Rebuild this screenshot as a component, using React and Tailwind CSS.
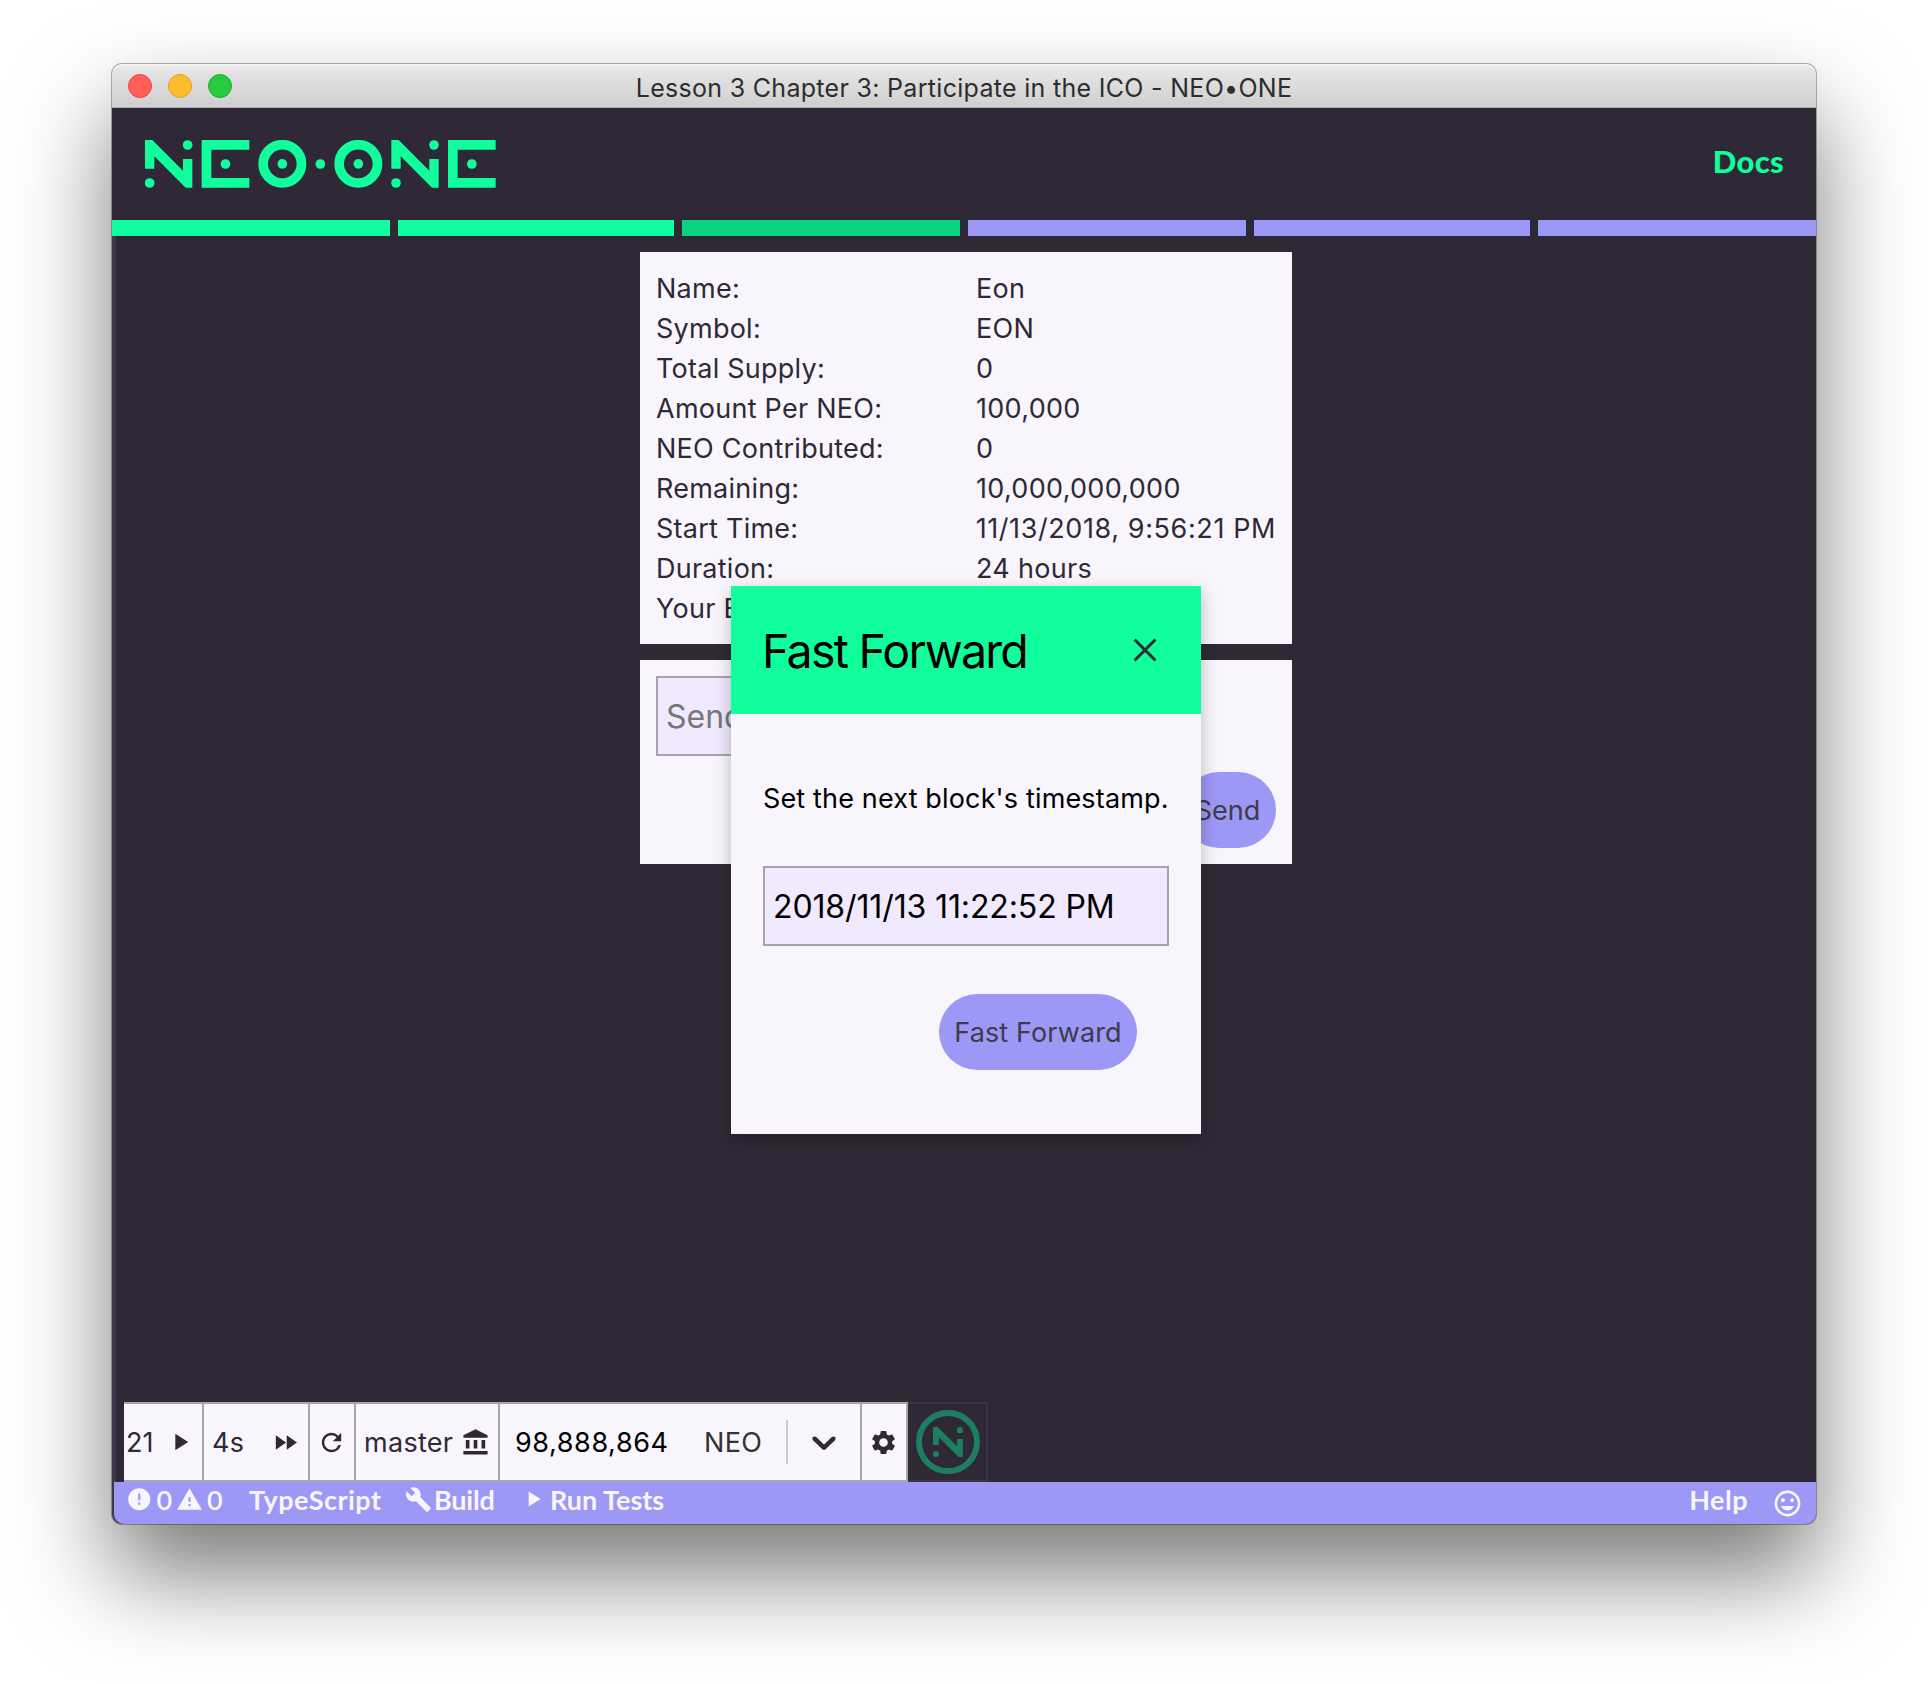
import React from "react";
import {
  MdPlayArrow,
  MdFastForward,
  MdRefresh,
  MdAccountBalance,
  MdSettings,
  MdError,
  MdWarning,
  MdBuild,
  MdInsertEmoticon,
} from "react-icons/md";

const NShape = () => (
  <>
    <path d="M0 0H22L114 92V57H142V143H122L28 49V86H0Z" />
    <circle cx="128" cy="15" r="14.5" />
    <circle cx="14" cy="129" r="14.5" />
  </>
);

const EShape = () => (
  <>
    <path d="M0 0H143V29H29V114H143V143H0Z" />
    <circle cx="71.5" cy="72" r="14.5" />
  </>
);

const OShape = () => (
  <>
    <circle cx="72" cy="71.5" r="57.5" fill="none" stroke="currentColor" strokeWidth="29" />
    <circle cx="72" cy="71.5" r="14.5" />
  </>
);

const Logo = () => (
  <svg className="ml-[0.67px] h-12 w-[351px] text-[#10ff9c]" viewBox="134 270 1053 144" fill="currentColor">
    <g transform="translate(134 270)"><NShape /></g>
    <g transform="translate(304 270)"><EShape /></g>
    <g transform="translate(474 270)"><OShape /></g>
    <circle cx="660" cy="342" r="14.5" />
    <g transform="translate(702 270)"><OShape /></g>
    <g transform="translate(873 270)"><NShape /></g>
    <g transform="translate(1043 270)"><EShape /></g>
  </svg>
);

const Badge = () => (
  <svg className="size-16 text-[#1e7e60]" viewBox="0 0 192 192" fill="currentColor">
    <circle cx="96" cy="96" r="87" fill="none" stroke="currentColor" strokeWidth="18" />
    <g transform="translate(51 51) scale(0.63)"><NShape /></g>
  </svg>
);

const Chevron = () => (
  <svg className="size-10" viewBox="0 0 20 20" fill="currentColor">
    <path d="M4.516 7.548c0.436-0.446 1.043-0.481 1.576 0l3.908 3.747 3.908-3.747c0.533-0.481 1.141-0.446 1.574 0 0.436 0.445 0.408 1.197 0 1.615-0.406 0.418-4.695 4.502-4.695 4.502-0.217 0.223-0.502 0.335-0.787 0.335s-0.57-0.112-0.789-0.335c0 0-4.287-4.084-4.695-4.502s-0.436-1.17 0-1.615z" />
  </svg>
);

const details = [
  ["Name:", "Eon"],
  ["Symbol:", "EON"],
  ["Total Supply:", "0"],
  ["Amount Per NEO:", "100,000"],
  ["NEO Contributed:", "0"],
  ["Remaining:", "10,000,000,000"],
  ["Start Time:", "11/13/2018, 9:56:21 PM"],
  ["Duration:", "24 hours"],
  ["Your Balance:", "0"],
];

const steps = [
  "w-[278px] bg-[#10ff9c]",
  "w-[276px] bg-[#10ff9c]",
  "w-[278px] bg-[#0bd381]",
  "w-[278px] bg-[#9c98f6]",
  "w-[276px] bg-[#9c98f6]",
  "w-[278px] bg-[#9c98f6]",
];

function TitleBar() {
  return (
    <div className="relative flex h-11 items-center rounded-t-[10px] border-b border-[#b4b2b6] bg-linear-to-b from-[#e9e9e9] to-[#cfcfcf] pt-px pl-4 shadow-[inset_0_2px_0_#f4f4f4]">
      <div className="flex gap-4">
        <span className="size-6 rounded-full border border-[#e0443e] bg-[#ff5f57]" />
        <span className="size-6 rounded-full border border-[#dea123] bg-[#ffbd2e]" />
        <span className="size-6 rounded-full border border-[#1aab29] bg-[#28ca41]" />
      </div>
      <span className="absolute inset-x-0 pt-1 text-center text-[25px] leading-none tracking-[0.3px] text-[#2e2d2e]">
        Lesson 3 Chapter 3: Participate in the ICO - NEO•ONE
      </span>
    </div>
  );
}

function Toolbar() {
  return (
    <div className="flex h-20 pl-3 leading-none text-[#2f2937]">
      <div className="flex border-y-2 border-[#aaa6ad] bg-[#f8f5fd]">
        <div className="flex w-20 items-center border-r-2 border-[#aaa6ad] pl-0.5">
          <span className="w-10">21</span>
          <MdPlayArrow size={28} />
        </div>
        <div className="flex w-[106px] items-center border-r-2 border-[#aaa6ad] pl-2">
          <span className="w-[59px] tracking-[0.3px]">4s</span>
          <MdFastForward size={29} />
        </div>
        <div className="flex w-[46px] items-center justify-center border-r-2 border-[#aaa6ad] pr-px">
          <MdRefresh size={29} />
        </div>
        <div className="flex w-36 items-center border-r-2 border-[#aaa6ad] pl-2">
          <span className="w-[97px] tracking-[0.3px]">master</span>
          <MdAccountBalance size={29} />
        </div>
        <div className="flex w-[362px] items-center border-r-2 border-[#aaa6ad] pl-[15px]">
          <span className="w-[189px] tracking-[0.6px] text-black">98,888,864</span>
          <span className="w-[82px] tracking-[0.3px] text-[#333]">NEO</span>
          <span className="h-11 w-0.5 bg-[#ccc9d0]" />
          <span className="ml-4">
            <Chevron />
          </span>
        </div>
        <div className="flex w-[46px] items-center justify-center border-r-2 border-[#aaa6ad] pr-px">
          <MdSettings size={29} />
        </div>
      </div>
      <div className="flex w-20 items-center justify-center border-2 border-l-0 border-[#3b3449] pl-0.5">
        <Badge />
      </div>
    </div>
  );
}

function Footer() {
  return (
    <div className="ml-0.5 flex h-[42px] items-center rounded-b-[10px] bg-[#9c98f6] pr-[13px] pb-2 pl-3 font-['Lato',sans-serif] text-[27px] leading-none font-bold text-[#f8f5fd]">
      <MdError size={26.5} className="mr-1" />
      <span className="w-[19.5px] font-semibold">0</span>
      <MdWarning size={27} className="mr-1" />
      <span className="w-[42px] font-semibold">0</span>
      <span className="w-[156px] tracking-[0.5px]">TypeScript</span>
      <MdBuild size={27} className="mr-0.5" />
      <span className="w-[86px] tracking-[-0.2px]">Build</span>
      <MdPlayArrow size={26} className="mr-1" />
      <span>Run Tests</span>
      <span className="mr-6 ml-auto tracking-[0.5px]">Help</span>
      <MdInsertEmoticon size={31} className="mt-2" />
    </div>
  );
}

function Modal() {
  return (
    <div className="absolute top-[350px] left-[619px] w-[470px] bg-[#f8f5fd] text-black shadow-[0_6px_16px_rgba(0,0,0,0.25)]">
      <div className="flex h-32 items-center justify-between bg-[#10ff9c] pr-[44px] pl-[31px]">
        <h2 className="pt-0.5 text-[46.5px] leading-none tracking-[-1.75px]">Fast Forward</h2>
        <svg className="size-6 text-[#2f2937]" viewBox="0 0 24 24" fill="none" stroke="currentColor" strokeWidth="3">
          <path d="M1.5 1.5L22.5 22.5M22.5 1.5L1.5 22.5" />
        </svg>
      </div>
      <div className="flex flex-col px-8 py-16">
        <p className="h-10 pt-px leading-10 tracking-[0.15px] whitespace-nowrap">Set the next block's timestamp.</p>
        <div className="mt-12 flex h-20 items-center border-2 border-[#a7a2af] bg-[#f1e9fe] pt-0.5 pl-2 text-[32px] leading-none tracking-[-0.12px]">
          2018/11/13 11:22:52 PM
        </div>
        <button className="mt-12 mr-8 h-[76px] w-[198px] self-end rounded-full bg-[#9c98f6] pt-0.5 tracking-[0.1px] text-[#403a4c]">
          Fast Forward
        </button>
      </div>
    </div>
  );
}

export default function App() {
  return (
    <div className="h-[1684px] w-[1928px] overflow-hidden bg-white px-28 pt-16 font-['Inter',sans-serif] text-[27px]">
      <div className="h-[1460px] w-[1704px] rounded-[10px] bg-[#3f384d] shadow-[0_0_0_1px_rgba(0,0,0,0.3),0_50px_96px_rgba(0,0,0,0.53)]">
        <TitleBar />
        <div className="flex h-28 items-center justify-between bg-[#2f2937] px-8">
          <Logo />
          <span className="pb-1.5 font-['Lato',sans-serif] text-[31px] leading-none font-black tracking-[0.3px] text-[#10ff9c]">Docs</span>
        </div>
        <div className="flex h-4 gap-2 bg-[#2f2937]">
          {steps.map((step, i) => (
            <div key={i} className={step} />
          ))}
        </div>
        <div className="relative h-[1246px]">
          <div className="ml-1 flex h-full flex-col bg-[#2f2937] pt-4 text-[#2f2937]">
            <div className="mx-auto flex w-[652px] flex-1 flex-col gap-4">
              <div className="bg-[#f8f5fd] p-4">
                {details.map(([label, value]) => (
                  <div key={label} className="flex h-10 items-center leading-none whitespace-nowrap">
                    <span className="w-80 tracking-[0.25px]">{label}</span>
                    <span className={value.includes("/") ? "tracking-[0.6px]" : "tracking-[0.3px]"}>{value}</span>
                  </div>
                ))}
              </div>
              <div className="flex flex-col gap-4 bg-[#f8f5fd] p-4">
                <div className="flex h-20 w-[406px] items-center border-2 border-[#a7a2af] bg-[#f1e9fe] pt-0.5 pl-2 text-[32px] leading-none text-[#777]">
                  Send NEO
                </div>
                <button className="h-[76px] w-[95px] self-end rounded-full bg-[#9c98f6] pt-0.5 pr-0.5 text-[#403a4c]">Send</button>
              </div>
            </div>
            <div className="-ml-1">
              <Toolbar />
            </div>
          </div>
          <Modal />
        </div>
        <Footer />
      </div>
    </div>
  );
}
